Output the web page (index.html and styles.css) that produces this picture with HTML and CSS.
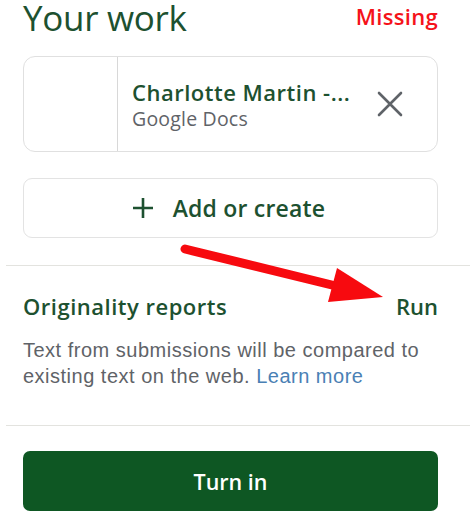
FILE: index.html
```html
<!DOCTYPE html>
<html>
<head>
<meta charset="utf-8">
<link rel="stylesheet" href="styles.css">
</head>
<body>
<div class="page">
  <div class="section top">
    <div class="header">
      <h1 class="title">Your work</h1>
      <span class="status">Missing</span>
    </div>
    <div class="card">
      <div class="thumb"></div>
      <div class="info">
        <div class="name">Charlotte Martin -...</div>
        <div class="type">Google Docs</div>
      </div>
      <svg class="close" width="26" height="26" viewBox="0 0 26 26"><path d="M2 2L24 24M24 2L2 24" stroke="#5f6368" stroke-width="2.6" stroke-linecap="round"/></svg>
    </div>
    <div class="add">
      <svg class="plus" width="22" height="22" viewBox="0 0 22 22"><path d="M11 1V21M1 11H21" stroke="#1d5130" stroke-width="2.6"/></svg>
      <span>Add or create</span>
    </div>
  </div>
  <div class="section orig">
    <div class="orig-head">
      <span class="orig-title">Originality reports</span>
      <span class="run">Run</span>
    </div>
    <p class="desc">Text from submissions will be compared to existing text on the web. <span class="link">Learn more</span></p>
  </div>
  <div class="section bottom">
    <div class="turnin">Turn in</div>
  </div>
  <svg class="arrow" width="475" height="517" viewBox="0 0 475 517">
    <line x1="185" y1="249" x2="340" y2="287" stroke="#f70a0f" stroke-width="9" stroke-linecap="round"/>
    <polygon points="337,268 383,297 328,302" fill="#f70a0f"/>
  </svg>
</div>
</body>
</html>
```
FILE: styles.css
```css
* { box-sizing: border-box; }
html, body { margin: 0; padding: 0; background: #fff; }
body { font-family: "Open Sans", Roboto, sans-serif; width: 475px; height: 517px; overflow: hidden; }
.page { position: relative; width: 475px; height: 517px; }
.section { padding: 0 37px 0 23px; }
.top { padding-bottom: 27px; border-bottom: 1.5px solid #e3e3df; margin: 0 5px 0 6px; padding-left: 17px; padding-right: 32px; }
.header { display: flex; justify-content: space-between; align-items: flex-start; height: 56px; }
.title { margin: 0; font-weight: 400; font-size: 35px; color: #1d5130; line-height: 36px; letter-spacing: -0.3px; }
.status { color: #f5121a; font-size: 22px; font-weight: 600; line-height: 30px; margin-top: 1px; letter-spacing: 0.3px; }
.card { display: flex; align-items: center; height: 96px; border: 1.5px solid #e0e0e0; border-radius: 12px; }
.thumb { width: 94px; height: 100%; border-right: 1px solid #d8d8d8; }
.info { flex: 1; padding-left: 14px; padding-top: 2px; }
.name { font-size: 22px; font-weight: 600; color: #1d5130; line-height: 28px; letter-spacing: 0.5px; }
.type { font-size: 19.5px; color: #5f6368; line-height: 26px; letter-spacing: 0.2px; }
.close { margin-right: 34px; }
.add { margin-top: 26px; height: 60px; border: 1.5px solid #e3e3e3; border-radius: 9px; display: flex; align-items: center; justify-content: center; gap: 19px; font-size: 23px; font-weight: 600; color: #1d5130; padding-right: 4px; letter-spacing: 0.2px; }
.orig { padding-top: 25px; padding-bottom: 36px; border-bottom: 1.5px solid #e3e3df; margin: 0 5px 0 6px; padding-left: 17px; padding-right: 32px; }
.orig-head { display: flex; justify-content: space-between; font-size: 22px; font-weight: 600; color: #1d5130; line-height: 30px; letter-spacing: 0.5px; }
.run { letter-spacing: 0; }
.desc { margin: 16px 0 0; font-family: "Liberation Sans", Arial, sans-serif; font-size: 20px; line-height: 26px; color: #5f6368; letter-spacing: 0.5px; }
.link { color: #4a80b4; }
.bottom { padding-top: 25px; }
.turnin { height: 60px; background: #0e5723; border-radius: 7px; color: #fff; font-size: 21.5px; font-weight: 600; display: flex; align-items: center; justify-content: center; }
.arrow { position: absolute; left: 0; top: 0; pointer-events: none; }
```
